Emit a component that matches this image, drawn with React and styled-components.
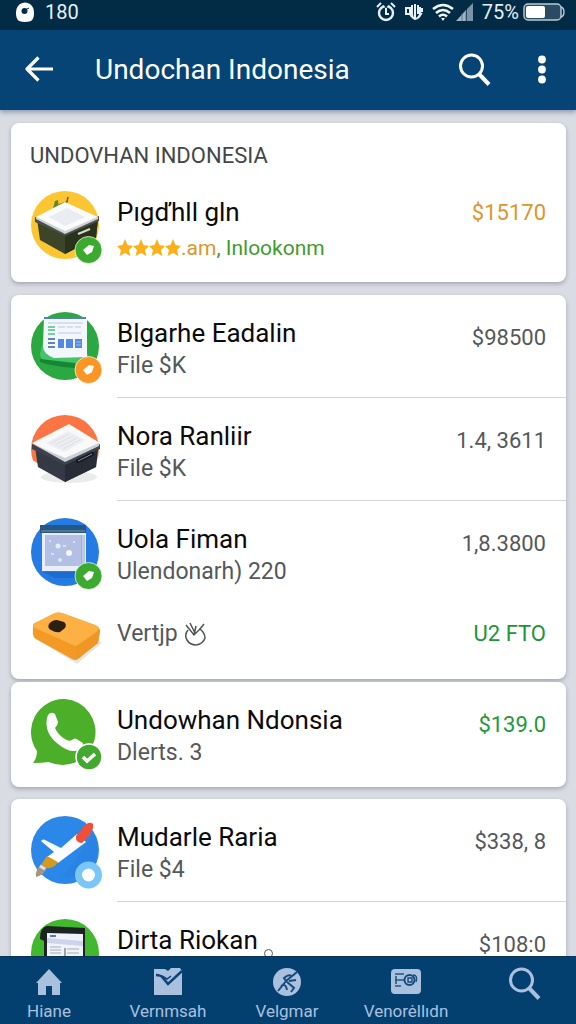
import React from 'react';
import styled, { createGlobalStyle } from 'styled-components';

const GlobalStyle = createGlobalStyle`
  * {
    box-sizing: border-box;
  }

  body {
    margin: 0;
    font-family: Roboto, "Liberation Sans", sans-serif;
    background-color: #d9dce3;
  }
`;

const Screen = styled.div`
  display: flex;
  flex-direction: column;
  height: 100vh;
  overflow: hidden;
`;

const StatusBar = styled.div`
  display: flex;
  flex-shrink: 0;
  align-items: center;
  justify-content: space-between;
  height: 30px;
  padding: 0 11px 6px 16px;
  background-color: #022b46;
  color: #e6f0f5;
  font-size: 20px;
  line-height: 24px;
`;

const StatusGroup = styled.div`
  display: flex;
  align-items: center;
  gap: ${({ $gap }) => $gap}px;
`;

const Header = styled.header`
  display: flex;
  flex-shrink: 0;
  align-items: center;
  height: 80px;
  padding: 0 30px 0 22px;
  background-color: #054475;
  box-shadow: 0 2px 5px rgba(20, 40, 80, 0.4);
  color: #ffffff;
  z-index: 1;
`;

const HeaderTitle = styled.h1`
  flex: 1;
  margin: 0 0 0 39px;
  font-size: 28px;
  font-weight: 400;
  line-height: 36px;
`;

const IconButton = styled.button`
  display: flex;
  padding: 0;
  border: none;
  background: none;
  color: inherit;
  cursor: pointer;
`;

const HeaderActions = styled.div`
  display: flex;
  align-items: center;
  gap: 46px;
`;

const Content = styled.main`
  flex: 1;
  min-height: 0;
  overflow: hidden;
  padding: 13px 10px 0 11px;
`;

const Card = styled.section`
  margin-bottom: ${({ $gap }) => $gap || 12}px;
  padding-bottom: ${({ $tail }) => $tail || 0}px;
  border-radius: 8px;
  background-color: #ffffff;
  box-shadow: 0 2px 4px rgba(60, 65, 80, 0.35);
`;

const CardHeading = styled.h2`
  margin: 0;
  padding: 19px 19px 4px;
  color: #444648;
  font-size: 22px;
  font-weight: 400;
  line-height: 28px;
`;

const Row = styled.div`
  display: flex;
  gap: 14px;
  height: ${({ $compact, $divided }) => ($compact ? 76 : $divided ? 103 : 102)}px;
  padding-left: 20px;

  > svg {
    flex-shrink: 0;
    margin-top: ${({ $compact }) => ($compact ? 9 : 17)}px;
  }
`;

const RowBody = styled.div`
  display: flex;
  flex: 1;
  align-items: flex-start;
  justify-content: space-between;
  min-width: 0;
  padding: ${({ $compact }) => ($compact ? '14px 20px 0 0' : '22px 20px 0 0')};
  border-bottom: ${({ $divided }) => ($divided ? '1px solid #d3d5d8' : 'none')};
`;

const Title = styled.h3`
  margin: 0;
  color: #0b0b0c;
  font-size: 26px;
  font-weight: 400;
  line-height: 32px;
  white-space: nowrap;
`;

const Subtitle = styled.p`
  display: flex;
  align-items: center;
  gap: 6px;
  margin: 0;
  color: #55585a;
  font-size: 23px;
  line-height: 34px;
  white-space: nowrap;
`;

const Rating = styled.p`
  display: flex;
  align-items: center;
  margin: 0;
  padding-top: 4px;
  color: #3f9b2c;
  font-size: 21px;
  line-height: 32px;
  white-space: nowrap;
`;

const Votes = styled.span`
  color: #e0952a;
`;

const Price = styled.span`
  flex-shrink: 0;
  padding-top: ${({ $raised }) => ($raised ? 6 : 10)}px;
  color: ${({ $color }) => $color || '#55585a'};
  font-size: 22px;
  line-height: 22px;
  white-space: nowrap;
`;

const BottomNav = styled.nav`
  display: flex;
  flex-shrink: 0;
  justify-content: space-between;
  height: 68px;
  padding: 0 3px 0 1px;
  background-color: #04406f;
  border-top: 1px solid #0b3558;
  z-index: 1;
`;

const NavButton = styled.button`
  display: flex;
  flex-direction: column;
  align-items: center;
  gap: 4px;
  width: 96px;
  padding: 10px 0 0;
  border: none;
  background: none;
  color: #a9c0de;
  font-family: inherit;
  font-size: 17px;
  line-height: 20px;
  cursor: pointer;
`;

/* status bar and toolbar icons */

const CameraIcon = () => (
  <svg width="18" height="20" viewBox="0 0 18 20">
    <path d="M4 2Q9-1 14 2Q18 5 18 11Q18 17 15 19Q9 21 3 19Q0 17 0 11Q0 5 4 2Z" fill="#fff" />
    <circle cx="8.500" cy="9" r="3" fill="#022b46" />
    <path d="M9 8l4-2" stroke="#022b46" />
  </svg>
);

const AlarmIcon = () => (
  <svg width="20" height="20" viewBox="0 0 20 20" fill="none" stroke="#e6f0f5">
    <circle cx="10" cy="11" r="7" strokeWidth="2.400" />
    <path d="M1 5l4-4M19 5l-4-4" strokeWidth="2" />
    <path d="M7 2h6l-3 4z" fill="#022b46" stroke="none" />
    <path d="M10 6v6h3" strokeWidth="2" />
  </svg>
);

const VibrateIcon = () => (
  <svg width="18" height="18" viewBox="0 0 18 18" fill="none" stroke="#e6f0f5" strokeWidth="2">
    <path d="M1 4v8M1 5h4v6H2M7 2v9q0 4 3 5q5-1 5-6V4M10 1v14M13 2v9M17 5v4" />
    <path d="M5 12l3 3M14 14l3-4" strokeWidth="1.500" />
  </svg>
);

const WifiIcon = () => (
  <svg width="22" height="18" viewBox="0 0 22 18" fill="none" stroke="#eef5f8" strokeWidth="2.600">
    <path d="M1 6Q11-2 21 6M4 10Q11 4 18 10M7 13.500Q11 10 15 13.500" />
    <path d="M9 15h4l-2 3z" fill="#eef5f8" stroke="none" />
  </svg>
);

const SignalIcon = () => (
  <svg width="17" height="18" viewBox="0 0 17 18">
    <path d="M0 18L10 7V18Z" fill="#9fb4c4" />
    <path d="M6 11v7M10 7v11" stroke="#5d7a90" />
    <path d="M11 6L17 0V18H11Z" fill="#7c94a8" />
  </svg>
);

const BatteryIcon = () => (
  <svg width="42" height="18" viewBox="0 0 42 18">
    <rect x="1" y="1" width="37" height="16" rx="4" fill="#2a4b61" stroke="#b9cad5" strokeWidth="1.400" />
    <path d="M38 4q3 1 3 5t-3 5" fill="none" stroke="#b9cad5" strokeWidth="1.400" />
    <rect x="3" y="3" width="19" height="12" rx="2" fill="#fff" />
  </svg>
);

const BackIcon = () => (
  <svg width="34" height="30" viewBox="0 0 34 30" fill="none" stroke="#fff" strokeWidth="3.200">
    <path d="M16.500 2.500L5 14L16.500 25.500M5 14H31" strokeLinejoin="round" />
  </svg>
);

const SearchIcon = ({ size }) => (
  <svg width={size} height={size} viewBox="0 0 34 34" fill="none" stroke="currentColor">
    <circle cx="13.500" cy="13" r="11" strokeWidth="3" />
    <path d="M21 21L31 31.500" strokeWidth="4" />
  </svg>
);

const MoreIcon = () => (
  <svg width="8" height="30" viewBox="0 0 8 30" fill="#fff">
    <circle cx="4" cy="4.500" r="3.900" />
    <circle cx="4" cy="14.500" r="3.900" />
    <circle cx="4" cy="24.500" r="3.900" />
  </svg>
);

/* app artwork */

const Badge = ({ color, y = 58 }) => (
  <g>
    <circle cx="57.500" cy={y} r="13.500" fill={color} stroke="#fff" strokeOpacity="0.700" />
    <path d={`M52 ${y}L58 ${y - 5}L63 ${y - 4}L61 ${y + 2}L56 ${y + 5}Z`} fill="#fff" />
  </g>
);

const CrateIcon = () => (
  <svg width="72" height="74" viewBox="0 0 72 74">
    <circle cx="34" cy="34" r="34" fill="#fcc532" />
    <path d="M28 14l8-3 1-5" fill="none" stroke="#6b5a10" strokeWidth="1.500" />
    <path d="M22 18l2-8 3-1 1 8z" fill="#5d8a22" />
    <path d="M6 28L33 43L67 28L65 47L34 63L9 49Z" fill="#3c4528" />
    <path d="M34 43L67 28L65 47L34 63Z" fill="#2a321b" />
    <path d="M4 26L34 41L68 25V30L34 45L4 31Z" fill="#4b5049" />
    <path d="M5 26L34 11L67 26L34 41Z" fill="#fbfbfc" />
    <path d="M5 26L34 40L67 26V28L34 43L5 28Z" fill="#d0d4d8" />
    <path d="M18 26L36 17L54 26L34 35Z" fill="#e9ecf1" />
    <path d="M47 43L59 38" stroke="#d8dbc8" strokeWidth="2" />
    <Badge color="#3ca92f" y={59} />
  </svg>
);

const SheetIcon = () => (
  <svg width="72" height="72" viewBox="0 0 72 72">
    <circle cx="34" cy="34" r="34" fill="#2ba840" />
    <path d="M12 29L9 42Q9 47 14 48L44 52L57 46V42L18 40Z" fill="#46c269" />
    <path d="M9 47L44 51V56Q20 54 9 50Z" fill="#148634" />
    <path d="M13 5H54Q56 5 56 8V45L23 46Q12 42 12 34Z" fill="#f2f6fd" />
    <path d="M13 6H55" stroke="#5581b4" strokeWidth="2" />
    <path d="M17 11H52M27 15H34M36 15H42M44 15H50M27 21H50" stroke="#bcc7e4" />
    <path d="M17 15H24M17 18H24M17 22H24" stroke="#77cf99" strokeWidth="2" />
    <path d="M17 27H24M17 31H24M17 35H24" stroke="#6586b3" strokeWidth="2" />
    <path d="M27 27h6v9h-6zM35 27h7v9h-7zM44 27h7v9h-7z" fill="#5388e4" />
    <path d="M45 30h5M45 33h5" stroke="#9bbbf2" />
    <Badge color="#fb9524" y={58} />
  </svg>
);

const ArchiveIcon = () => (
  <svg width="72" height="72" viewBox="0 0 72 72">
    <circle cx="34" cy="34" r="34" fill="#fb7443" />
    <path d="M0 44L34 66L68 44V72H0Z" fill="#fff" />
    <ellipse cx="38" cy="62" rx="28" ry="6" fill="#000" opacity="0.080" />
    <path d="M4 32L34 47L67 32L65 52L34 67L7 52Z" fill="#343945" />
    <path d="M34 47L67 32L65 52L34 67Z" fill="#272c37" />
    <path d="M1 29L34 44L69 29V34L34 50L1 34Z" fill="#3d424e" />
    <path d="M1 28L38 9L69 28L34 46Z" fill="#f9f9fa" />
    <path d="M2 29L34 43L68 28V31L34 47Z" fill="#cbcfd6" />
    <path d="M15 28L37 16L54 25L33 37Z" fill="#eceef1" />
    <path d="M20 28l18-9M24 30l18-9M28 32l18-9M32 34l17-9" stroke="#dcdfe4" />
    <path d="M47 46L61 39" stroke="#12151d" strokeWidth="4" strokeLinecap="round" />
    <path d="M47 46L61 39" stroke="#8b919d" />
  </svg>
);

const WindowIcon = () => (
  <svg width="72" height="72" viewBox="0 0 72 72">
    <circle cx="34" cy="34" r="34" fill="#257be4" />
    <path d="M12 54H56L46 60H24Z" fill="#1b6cd0" />
    <rect x="11" y="14" width="44" height="39" fill="#e9eef8" />
    <rect x="14" y="17" width="37" height="31" fill="#b4c0e3" />
    <path d="M51 17V48M53 17V50" stroke="#91a4cb" />
    <rect x="9" y="7" width="46" height="8" fill="#285783" />
    <path d="M10 13H54" stroke="#7391a6" />
    <circle cx="27" cy="28" r="2.500" fill="#e6ecfa" />
    <circle cx="38" cy="35" r="3" fill="#f2f5fc" />
    <circle cx="29" cy="42" r="1.800" fill="#e6ecfa" />
    <path d="M32 28h3M20 36h3M42 24h2M18 23h2" stroke="#d8e0f5" strokeWidth="2" />
    <Badge color="#3ca92f" y={58} />
  </svg>
);

const DeviceIcon = () => (
  <svg width="72" height="52" viewBox="0 0 72 52">
    <path d="M5 27L46 52L71 31L66 26Z" fill="#000" opacity="0.100" />
    <path d="M2 14Q2 11 6 10L24 1Q27 0 31 1L64 13Q69 15 69 19L67 31L47 47Q44 49 41 47L5 27Q2 25 2 22Z" fill="#f29a23" />
    <path d="M2 14Q2 11 6 10L24 1Q27 0 31 1L64 13Q71 16 65 20L49 33Q46 35 42 33L4 16Z" fill="#fdb043" />
    <path d="M45 34V48L67 31L69 18Z" fill="#ef9724" />
    <path d="M18 12Q21 8 26 8L33 10Q36 12 34 16L29 20Q25 21 20 18Q16 16 18 12Z" fill="#2b2012" />
  </svg>
);

const ChatIcon = () => (
  <svg width="72" height="74" viewBox="0 0 72 74">
    <path d="M34 0A33 33 0 1 1 18 63Q11 64 2 64Q6 59 6 52A33 33 0 0 1 34 0Z" fill="#4caf2a" />
    <path
      d="M17 16Q20 12 24 15L27 23Q27 26 24 29Q27 36 34 40Q38 43 41 41Q44 38 47 41L52 44Q52 51 44 52Q37 53 27 45Q13 34 16 19Z"
      fill="#fff"
    />
    <circle cx="58" cy="58" r="13" fill="#43a82f" stroke="#fff" strokeWidth="1.500" />
    <path d="M52 58L56 62L64 55" fill="none" stroke="#fff" strokeWidth="3.500" />
  </svg>
);

const BrushIcon = () => (
  <svg width="72" height="74" viewBox="0 0 72 74">
    <circle cx="34" cy="34" r="34" fill="#2c88e8" />
    <path d="M31 62L63 18Q73 42 53 60Z" fill="#1c74d7" opacity="0.250" />
    <path d="M10 25Q12 22 16 25L30 32L46 18L55 26L27 47L16 41L23 36Z" fill="#fafcff" />
    <path d="M45 20L54 9Q59 5 62 8Q63 13 58 20L51 27Q44 27 45 20Z" fill="#f0503a" />
    <path d="M16 40L27 46Q23 53 15 52L10 49Z" fill="#d49a20" />
    <path d="M10 48L16 52Q13 59 5 61Q4 54 10 48Z" fill="#a59680" />
    <path d="M9 50L14 53" stroke="#d7e4ee" strokeWidth="3" />
    <circle cx="57.500" cy="59" r="13.500" fill="#79c6f8" />
    <circle cx="57.500" cy="59" r="6.500" fill="#fff" />
  </svg>
);

const TabletIcon = () => (
  <svg width="72" height="72" viewBox="0 0 72 72">
    <circle cx="34" cy="34" r="34" fill="#42b82f" />
    <path d="M9 20Q9 8 16 7L54 9V60H13V22Z" fill="#1c2320" />
    <path d="M16 14L52 15V56H16Z" fill="#f1f3fa" />
    <path d="M16 19L52 22V27L16 24Z" fill="#cfd3ec" />
    <path d="M19 17h6" stroke="#4f7dc4" strokeWidth="2" />
    <path d="M19 28h11M19 31h11M19 34h11M36 30h12M36 34h12" stroke="#a5abb5" />
    <path d="M34 29V50" stroke="#555" />
  </svg>
);

const Star = () => (
  <svg width="16" height="18" viewBox="0 0 16 18">
    <path d="M8 0L10.500 6L16 7L12 11L13.500 17L8 14L2.500 17L4 11L0 7L5.500 6Z" fill="#fbb017" />
  </svg>
);

const LeafMark = () => (
  <svg width="24" height="26" viewBox="0 0 24 26" fill="none" stroke="#505356" strokeWidth="1.500">
    <path d="M4 9Q0 14 3 19Q6 24 12 24Q19 23 21 17Q21 12 16 8L20 3M16 8L10 14L2 4M6 2L11 12M12 5L10 14" />
  </svg>
);

const RingMark = styled.span`
  display: inline-block;
  width: 9px;
  height: 9px;
  margin-left: 6px;
  border: 1px solid #55585a;
  border-radius: 50%;
  vertical-align: -9px;
`;

/* bottom navigation icons */

const HomeIcon = () => (
  <svg width="28" height="30" viewBox="0 0 28 30" fill="currentColor">
    <path d="M14 2L27 16H25V28H17V19H11V28H3V16H1Z" />
  </svg>
);

const InboxIcon = () => (
  <svg width="30" height="30" viewBox="0 0 30 30">
    <path d="M1 2H12L15 4L18 1H27L29 4V28H1Z" fill="currentColor" />
    <path d="M3 8Q8 8 10 11L15 17L29 4" fill="none" stroke="#0d4477" strokeWidth="2.500" />
    <path d="M9 9L14 12L18 9" fill="none" stroke="#0d4477" strokeWidth="1.500" />
  </svg>
);

const CompassIcon = () => (
  <svg width="30" height="30" viewBox="0 0 30 30">
    <circle cx="15" cy="15" r="14" fill="currentColor" />
    <path d="M25 5L14 14L12 11Q17 7 19 9M14 14L6 24M14 14L22 21L19 25M9 19Q14 16 15 23M17 14L24 13" fill="none" stroke="#174b7b" strokeWidth="2" />
  </svg>
);

const IdCardIcon = () => (
  <svg width="30" height="30" viewBox="0 0 30 30">
    <rect y="2" width="30" height="25" rx="4" fill="currentColor" />
    <path d="M4 7H13M4 13H13M4 19H10M5 9V17" fill="none" stroke="#285780" strokeWidth="1.600" />
    <circle cx="18.500" cy="13" r="5" fill="none" stroke="#174b7b" strokeWidth="2" />
    <path d="M17 11h4v4h-4zM22 8q5 0 3 7" fill="none" stroke="#174b7b" strokeWidth="1.400" />
  </svg>
);

const ListItem = ({ icon: Icon, title, subtitle, mark, price, priceColor, divided }) => (
  <Row $divided={divided}>
    <Icon />
    <RowBody $divided={divided}>
      <div>
        <Title>
          {title}
          {mark && <RingMark />}
        </Title>
        {subtitle && <Subtitle>{subtitle}</Subtitle>}
      </div>
      <Price $color={priceColor}>{price}</Price>
    </RowBody>
  </Row>
);

const navItems = [
  { label: 'Hiane', icon: HomeIcon },
  { label: 'Vernmsah', icon: InboxIcon },
  { label: 'Velgmar', icon: CompassIcon },
  { label: 'Venorėllıdn', icon: IdCardIcon },
];

const App = () => {
  return (
    <>
      <GlobalStyle />
      <Screen>
        <StatusBar>
          <StatusGroup $gap={11}>
            <CameraIcon />
            <span>180</span>
          </StatusGroup>
          <StatusGroup $gap={9}>
            <AlarmIcon />
            <VibrateIcon />
            <StatusGroup $gap={2}>
              <WifiIcon />
              <SignalIcon />
            </StatusGroup>
            <StatusGroup $gap={4}>
              <span>75%</span>
              <BatteryIcon />
            </StatusGroup>
          </StatusGroup>
        </StatusBar>

        <Header>
          <IconButton aria-label="Back">
            <BackIcon />
          </IconButton>
          <HeaderTitle>Undochan Indonesia</HeaderTitle>
          <HeaderActions>
            <IconButton aria-label="Search">
              <SearchIcon size={34} />
            </IconButton>
            <IconButton aria-label="More options">
              <MoreIcon />
            </IconButton>
          </HeaderActions>
        </Header>

        <Content>
          <Card $tail={6} $gap={13}>
            <CardHeading>UNDOVHAN INDONESIA</CardHeading>
            <Row>
              <CrateIcon />
              <RowBody>
                <div>
                  <Title>Pıgďhll gln</Title>
                  <Rating>
                    <Star />
                    <Star />
                    <Star />
                    <Star />
                    <Votes>.am</Votes>, Inlookonm
                  </Rating>
                </div>
                <Price $raised $color="#e0952a">$15170</Price>
              </RowBody>
            </Row>
          </Card>

          <Card $gap={3}>
            <ListItem icon={SheetIcon} title="Blgarhe Eadalin" subtitle="File $K" price="$98500" divided />
            <ListItem icon={ArchiveIcon} title="Nora Ranliir" subtitle="File $K" price="1.4, 3611" divided />
            <ListItem icon={WindowIcon} title="Uola Fiman" subtitle="Ulendonarh) 220" price="1,8.3800" />
            <Row $compact>
              <DeviceIcon />
              <RowBody $compact>
                <Subtitle>
                  Vertjp
                  <LeafMark />
                </Subtitle>
                <Price $raised $color="#1c9638">U2 FTO</Price>
              </RowBody>
            </Row>
          </Card>

          <Card $tail={3}>
            <ListItem icon={ChatIcon} title="Undowhan Ndonsia" subtitle="Dlerts. 3" price="$139.0" priceColor="#22993a" />
          </Card>

          <Card>
            <ListItem icon={BrushIcon} title="Mudarle Raria" subtitle="File $4" price="$338, 8" divided />
            <ListItem icon={TabletIcon} title="Dirta Riokan" mark price="$108:0" />
          </Card>
        </Content>

        <BottomNav>
          {navItems.map(({ label, icon: Icon }) => (
            <NavButton key={label}>
              <Icon />
              {label}
            </NavButton>
          ))}
          <NavButton aria-label="Search">
            <SearchIcon size={34} />
          </NavButton>
        </BottomNav>
      </Screen>
    </>
  );
};

export default App;
